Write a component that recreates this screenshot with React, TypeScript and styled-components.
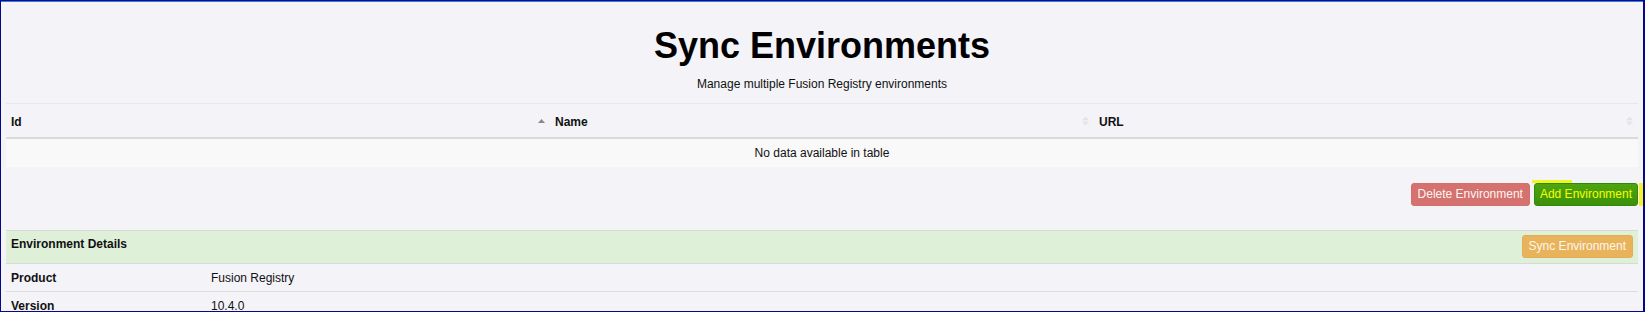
import React from "react";
import styled, { createGlobalStyle } from "styled-components";

const GlobalStyle = createGlobalStyle`
  html, body { margin: 0; padding: 0; background: #ffffff; }
  body { font-family: "Liberation Sans", Arial, sans-serif; color: #111; }
  * { box-sizing: border-box; }
`;

const Frame = styled.div`
  width: 1645px;
  height: 312px;
  border: 1px solid #07078a;
  border-right-width: 2px;
  background: #f3f3f8;
  box-shadow: inset 0 1px 0 #2f7fdc;
  overflow: hidden;
`;

const Content = styled.div`
  padding: 0 5px;
`;

const PageHeader = styled.header`
  text-align: center;
  padding: 25px 0 11px;
  border-bottom: 1px solid #e7e7ee;
`;

const Title = styled.h1`
  margin: 0;
  font-size: 36px;
  line-height: 40px;
  font-weight: 700;
  color: #000;
`;

const Subtitle = styled.p`
  margin: 10px 0 0;
  font-size: 12px;
  line-height: 16px;
  color: #111;
`;

const Table = styled.table`
  width: 100%;
  border-collapse: collapse;
  table-layout: fixed;
  font-size: 12px;
`;

const HeadCell = styled.th`
  position: relative;
  text-align: left;
  font-weight: 700;
  padding: 11px 5px 8px;
  line-height: 14px;
  border-bottom: 2px solid #d9d9d9;
  color: #111;
`;

const SortMark = styled.span<{ $active?: boolean }>`
  position: absolute;
  right: 5px;
  top: 50%;
  transform: translateY(-50%);
  display: flex;
  flex-direction: column;
  gap: 1px;
  opacity: ${(p) => (p.$active ? 1 : 0.35)};
`;

const BodyCell = styled.td`
  text-align: center;
  padding: 7px 5px;
  line-height: 14px;
  background: #f9f9f9;
  color: #111;
`;

const ButtonBar = styled.div`
  display: flex;
  justify-content: flex-end;
  gap: 4px;
  margin: 16px 0 24px;
`;

const Button = styled.button<{ $variant: "danger" | "success" | "warning" }>`
  font-family: "Liberation Sans", Arial, sans-serif;
  font-size: 12px;
  line-height: 15px;
  padding: 3px ${(p) => (p.$variant === "success" ? "5px" : "6px")};
  border-radius: 3px;
  border: 1px solid
    ${(p) =>
      p.$variant === "danger" ? "#d0716e" : p.$variant === "success" ? "#2e8a0a" : "#e2ad55"};
  background: ${(p) =>
    p.$variant === "danger"
      ? "#d5716f"
      : p.$variant === "success"
      ? "linear-gradient(#4ea511, #3d900a)"
      : "#e8b35a"};
  color: ${(p) => (p.$variant === "success" ? "#f4ff00" : "#fdf6ee")};
  cursor: pointer;
`;

const HighlightWrap = styled.span`
  position: relative;
  display: inline-flex;
  &::before {
    content: "";
    position: absolute;
    left: -2px;
    top: -3px;
    width: 40px;
    height: 3px;
    background: #f2f520;
  }
  &::after {
    content: "";
    position: absolute;
    right: -5px;
    top: 0;
    width: 4px;
    height: 100%;
    background: #f2f520;
  }
`;

const Panel = styled.section`
  display: flex;
  justify-content: space-between;
  align-items: flex-start;
  background: #dff0d8;
  border-top: 1px solid #d8d8d8;
  border-bottom: 1px solid #d8d8d8;
  padding: 4px 5px 5px;
`;

const PanelTitle = styled.h3`
  margin: 2px 0 0;
  font-size: 12px;
  line-height: 14px;
  font-weight: 700;
  color: #111;
`;

const DetailRow = styled.div`
  display: grid;
  grid-template-columns: 200px 1fr;
  padding: 7px 5px 6px;
  line-height: 14px;
  font-size: 12px;
  border-bottom: 1px solid #dcdcdc;
`;

const Label = styled.span`
  font-weight: 700;
  color: #111;
`;

const Value = styled.span`
  color: #111;
`;

const UpArrow = ({ color }: { color: string }) => (
  <svg width="7" height="4" viewBox="0 0 7 4">
    <polygon points="0,4 3.5,0 7,4" fill={color} />
  </svg>
);
const DownArrow = ({ color }: { color: string }) => (
  <svg width="7" height="4" viewBox="0 0 7 4">
    <polygon points="0,0 3.5,4 7,0" fill={color} />
  </svg>
);

export default function App() {
  return (
    <>
      <GlobalStyle />
      <Frame>
        <Content>
          <PageHeader>
            <Title>Sync Environments</Title>
            <Subtitle>Manage multiple Fusion Registry environments</Subtitle>
          </PageHeader>
          <Table>
            <thead>
              <tr>
                <HeadCell>
                  Id
                  <SortMark $active>
                    <UpArrow color="#8a8a8a" />
                  </SortMark>
                </HeadCell>
                <HeadCell>
                  Name
                  <SortMark>
                    <UpArrow color="#c8c8c8" />
                    <DownArrow color="#c8c8c8" />
                  </SortMark>
                </HeadCell>
                <HeadCell>
                  URL
                  <SortMark>
                    <UpArrow color="#c8c8c8" />
                    <DownArrow color="#c8c8c8" />
                  </SortMark>
                </HeadCell>
              </tr>
            </thead>
            <tbody>
              <tr>
                <BodyCell colSpan={3}>No data available in table</BodyCell>
              </tr>
            </tbody>
          </Table>
          <ButtonBar>
            <Button $variant="danger">Delete Environment</Button>
            <HighlightWrap>
              <Button $variant="success">Add Environment</Button>
            </HighlightWrap>
          </ButtonBar>
          <Panel>
            <PanelTitle>Environment Details</PanelTitle>
            <Button $variant="warning">Sync Environment</Button>
          </Panel>
          <DetailRow>
            <Label>Product</Label>
            <Value>Fusion Registry</Value>
          </DetailRow>
          <DetailRow>
            <Label>Version</Label>
            <Value>10.4.0</Value>
          </DetailRow>
        </Content>
      </Frame>
    </>
  );
}
